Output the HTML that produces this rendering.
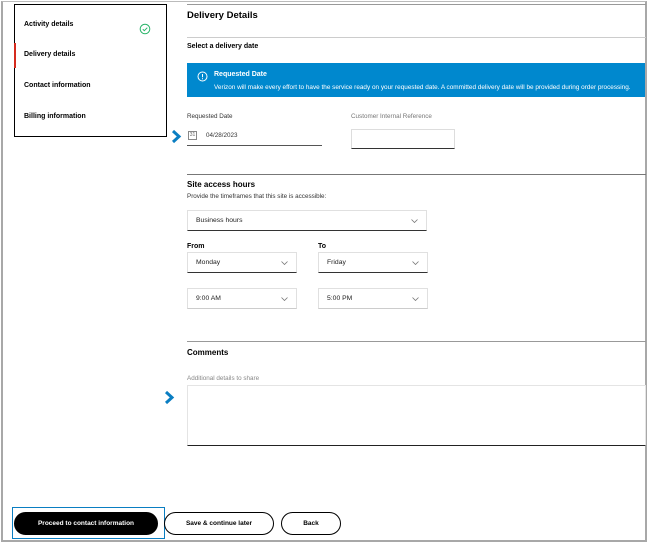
<!DOCTYPE html>
<html><head><style>
*{box-sizing:border-box;margin:0;padding:0}
body{width:649px;height:545px;background:#fff;font-family:"Liberation Sans",sans-serif;color:#000;position:relative;overflow:hidden}
.a{position:absolute}
.frame{left:1px;top:1px;width:646px;height:541px;border:2px solid #a8a8a8;border-top:1px solid #bbb}
.t{font-size:7px;font-weight:bold;white-space:nowrap}
.s{font-size:6.3px;white-space:nowrap;color:#333}
.dd{border:1px solid #e0e0e0;border-bottom:1px solid #333;font-size:6.8px;padding:0 8px;display:flex;align-items:center;justify-content:space-between;color:#222}
.btn{border-radius:12px;font-size:6.5px;font-weight:bold;display:flex;align-items:center;justify-content:center;border:1px solid #000}
</style></head><body>
<div class="a frame"></div>
<div class="a" style="left:14px;top:4px;width:153px;height:133px;border:1px solid #000"></div>
<div class="a" style="left:14px;top:43px;width:2px;height:25px;background:#d52b1e"></div>
<div class="a t" style="left:24px;top:21px">Activity details</div>
<div class="a t" style="left:24px;top:51px">Delivery details</div>
<div class="a t" style="left:24px;top:82px">Contact information</div>
<div class="a t" style="left:24px;top:113px">Billing information</div>
<svg class="a" style="left:139px;top:23px" width="12" height="12" viewBox="0 0 12 12"><circle cx="6" cy="6" r="4.8" fill="none" stroke="#2bb56b" stroke-width="1"/><path d="M3.8 6.2l1.5 1.5 3-3" fill="none" stroke="#2bb56b" stroke-width="1"/></svg>

<div class="a" style="left:187px;top:4px;width:459px;height:1px;background:#999"></div>
<div class="a" style="left:187px;top:10px;font-size:9.5px;font-weight:bold">Delivery Details</div>
<div class="a" style="left:187px;top:37px;width:459px;height:1px;background:#ccc"></div>
<div class="a t" style="left:187px;top:43px">Select a delivery date</div>
<div class="a" style="left:187px;top:63px;width:458px;height:34px;background:#0088ce;color:#fff">
<svg class="a" style="left:10px;top:8px" width="11" height="11" viewBox="0 0 11 11"><circle cx="5.5" cy="5.5" r="4.5" fill="none" stroke="#fff" stroke-width="1"/><path d="M5.5 3v3.2M5.5 7.3v1" stroke="#fff" stroke-width="1"/></svg>
<div class="a t" style="left:27px;top:8px">Requested Date</div>
<div class="a" style="left:27px;top:21px;font-size:6.4px;white-space:nowrap">Verizon will make every effort to have the service ready on your requested date. A committed delivery date will be provided during order processing.</div>
</div>
<div class="a s" style="left:187px;top:113px">Requested Date</div>
<div class="a s" style="left:351px;top:113px;color:#777">Customer Internal Reference</div>
<svg class="a" style="left:171px;top:129px" width="12" height="15" viewBox="0 0 12 15"><path d="M2 2l6 5.5-6 5.5" fill="none" stroke="#0a7ec2" stroke-width="3"/></svg>
<div class="a" style="left:188px;top:131px;width:9px;height:9px;border:1px solid #888;font-size:5px;color:#666;text-align:center;line-height:7px">31</div>
<div class="a s" style="left:206px;top:132px">04/28/2023</div>
<div class="a" style="left:187px;top:145px;width:135px;height:1px;background:#555"></div>
<div class="a" style="left:351px;top:129px;width:104px;height:20px;border:1px solid #ddd;border-bottom:1px solid #333"></div>

<div class="a" style="left:187px;top:174px;width:459px;height:1px;background:#777"></div>
<div class="a" style="left:187px;top:180px;font-size:8px;font-weight:bold">Site access hours</div>
<div class="a s" style="left:187px;top:193px">Provide the timeframes that this site is accessible:</div>
<div class="a dd" style="left:187px;top:210px;width:240px;height:21px"><span>Business hours</span><svg width="7" height="4"><path d="M0.5 0.5l3 3 3-3" fill="none" stroke="#777" stroke-width="0.8"/></svg></div>
<div class="a t" style="left:187px;top:243px">From</div>
<div class="a t" style="left:318px;top:243px">To</div>
<div class="a dd" style="left:187px;top:252px;width:110px;height:21px"><span>Monday</span><svg width="7" height="4"><path d="M0.5 0.5l3 3 3-3" fill="none" stroke="#777" stroke-width="0.8"/></svg></div>
<div class="a dd" style="left:318px;top:252px;width:110px;height:21px"><span>Friday</span><svg width="7" height="4"><path d="M0.5 0.5l3 3 3-3" fill="none" stroke="#777" stroke-width="0.8"/></svg></div>
<div class="a dd" style="left:187px;top:288px;width:110px;height:21px;border-bottom-color:#ccc"><span>9:00 AM</span><svg width="7" height="4"><path d="M0.5 0.5l3 3 3-3" fill="none" stroke="#777" stroke-width="0.8"/></svg></div>
<div class="a dd" style="left:318px;top:288px;width:110px;height:21px;border-bottom-color:#ccc"><span>5:00 PM</span><svg width="7" height="4"><path d="M0.5 0.5l3 3 3-3" fill="none" stroke="#777" stroke-width="0.8"/></svg></div>

<div class="a" style="left:187px;top:341px;width:459px;height:1px;background:#999"></div>
<div class="a" style="left:187px;top:348px;font-size:8px;font-weight:bold">Comments</div>
<div class="a s" style="left:187px;top:375px;color:#888">Additional details to share</div>
<svg class="a" style="left:164px;top:390px" width="12" height="15" viewBox="0 0 12 15"><path d="M2 2l6 5.5-6 5.5" fill="none" stroke="#0a7ec2" stroke-width="3"/></svg>
<div class="a" style="left:187px;top:385px;width:459px;height:61px;border:1px solid #e4e4e4;border-bottom:1px solid #222"></div>

<div class="a" style="left:12px;top:507px;width:153px;height:32px;border:1.5px solid #0a7ec2"></div>
<div class="a btn" style="left:14px;top:512px;width:144px;height:23px;background:#000;color:#fff">Proceed to contact information</div>
<div class="a btn" style="left:164px;top:512px;width:110px;height:23px;background:#fff">Save &amp; continue later</div>
<div class="a btn" style="left:281px;top:512px;width:60px;height:23px;background:#fff">Back</div>
</body></html>
